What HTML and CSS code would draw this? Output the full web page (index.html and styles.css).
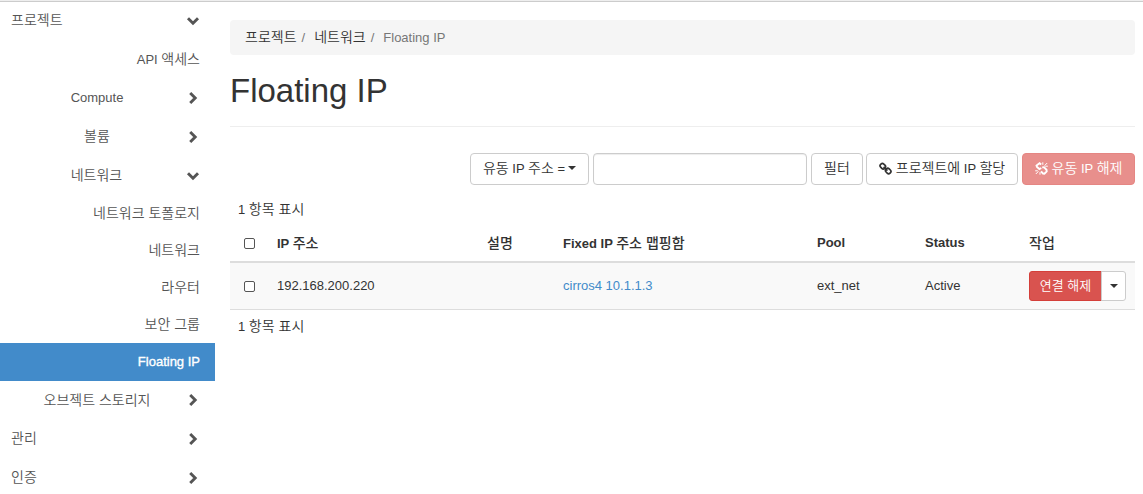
FILE: index.html
```html
<!DOCTYPE html>
<html lang="ko">
<head>
<meta charset="utf-8">
<title>Floating IP</title>
<link rel="stylesheet" href="styles.css">
</head>
<body>
<svg class="defs" width="0" height="0">
  <symbol id="right" viewBox="0 0 12 14"><path d="M3.2 2 L8.2 7 L3.2 12" fill="none" stroke="currentColor" stroke-width="2.9"/></symbol>
  <symbol id="down" viewBox="0 0 14 12"><path d="M2 3.2 L7 8.2 L12 3.2" fill="none" stroke="currentColor" stroke-width="2.9"/></symbol>
</svg>
<div class="page">
  <nav class="sidebar">
    <a class="item root"><span class="ko">프로젝트</span><svg class="chev-d"><use href="#down"/></svg></a>
    <a class="item leaf api"><span>API <span class="ko">액세스</span></span></a>
    <a class="item group"><span>Compute</span><svg class="chev-r"><use href="#right"/></svg></a>
    <a class="item group"><span class="ko">볼륨</span><svg class="chev-r"><use href="#right"/></svg></a>
    <a class="item group"><span class="ko">네트워크</span><svg class="chev-d"><use href="#down"/></svg></a>
    <a class="item leaf"><span class="ko">네트워크 토폴로지</span></a>
    <a class="item leaf"><span class="ko">네트워크</span></a>
    <a class="item leaf"><span class="ko">라우터</span></a>
    <a class="item leaf"><span class="ko">보안 그룹</span></a>
    <a class="item leaf active"><span>Floating IP</span></a>
    <a class="item group storage"><span class="ko">오브젝트 스토리지</span><svg class="chev-r"><use href="#right"/></svg></a>
    <a class="item root"><span class="ko">관리</span><svg class="chev-r"><use href="#right"/></svg></a>
    <a class="item root"><span class="ko">인증</span><svg class="chev-r"><use href="#right"/></svg></a>
  </nav>
  <main class="content">
    <div class="breadcrumb">
      <span class="ko">프로젝트</span><span class="sep">/</span><span class="ko">네트워크</span><span class="sep">/</span><span class="current">Floating IP</span>
    </div>
    <h1>Floating IP</h1>
    <div class="toolbar">
      <button class="btn filter-by"><span><span class="ko">유동</span> IP <span class="ko">주소</span> =</span><i class="caret"></i></button>
      <input class="search" type="text">
      <button class="btn filter"><span class="ko">필터</span></button>
      <button class="btn allocate">
        <svg class="link" viewBox="0 0 13 13"><g fill="none" stroke="currentColor" stroke-width="1.7"><rect x="1" y="2" width="5.6" height="4.4" rx="2" transform="rotate(45 3.8 4.2)"/><rect x="6.4" y="6.8" width="5.6" height="4.4" rx="2" transform="rotate(45 9.2 9)"/><path d="M4.6 4.8l3.8 3.8"/></g></svg>
        <span><span class="ko">프로젝트에</span> IP <span class="ko">할당</span></span>
      </button>
      <button class="btn release">
        <svg class="link" viewBox="0 0 13 13"><g fill="none" stroke="currentColor" stroke-width="1.9"><path d="M6.2 2.4L4.6 1.2L1.5 3.5L2 5L4.4 7L6.3 6M7.2 5.4L9 5.2L11.5 7.8L11.7 9.4L9.4 11.7L8 11.5L6 9.3"/><path d="M7.8 .3v2.5M12.2 1L9.6 3.6M10.2 4.2h2.6M.2 8.8h2.6M3.4 9.4L.8 12M5 10.2v2.5" stroke-width="1"/></g></svg>
        <span><span class="ko">유동</span> IP <span class="ko">해제</span></span>
      </button>
    </div>
    <div class="count top">1 <span class="ko">항목 표시</span></div>
    <table>
      <colgroup><col class="c1"><col class="c2"><col class="c3"><col class="c4"><col class="c5"><col class="c6"><col class="c7"></colgroup>
      <thead><tr>
        <th><i class="check"></i></th><th>IP <span class="ko">주소</span></th><th><span class="ko">설명</span></th><th>Fixed IP <span class="ko">주소 맵핑함</span></th><th>Pool</th><th>Status</th><th><span class="ko">작업</span></th>
      </tr></thead>
      <tbody><tr>
        <td><i class="check"></i></td><td>192.168.200.220</td><td></td><td><a class="link-text">cirros4 10.1.1.3</a></td><td>ext_net</td><td>Active</td>
        <td><div class="actions"><button class="danger"><span class="ko">연결 해제</span></button><button class="toggle"><i class="caret"></i></button></div></td>
      </tr></tbody>
    </table>
    <div class="count bottom">1 <span class="ko">항목 표시</span></div>
  </main>
</div>
</body>
</html>
```
FILE: styles.css
```css
* { box-sizing: border-box; }
body {
  margin: 0; height: 494px; overflow: hidden; background: #fff; color: #333;
  font: 13px/18px "Liberation Sans", "Noto Sans CJK KR", sans-serif;
}
.defs { position: absolute; }
.ko { font-family: "Noto Sans CJK KR", sans-serif; font-size: 14px; font-weight: 350; line-height: 18px; }
.page { display: flex; height: 494px; overflow: hidden; border-top: 1px solid #eee; box-shadow: inset 0 1px #ccc; }
.sidebar { width: 215px; flex: none; color: #555; }
.item { display: flex; align-items: center; height: 39px; padding: 0 15px 0 11px; white-space: nowrap; }
.item > .ko, .breadcrumb > .ko { margin-bottom: 3px; }
.item svg { flex: none; }
.root { justify-content: space-between; }
.group { padding-left: 0; }
.group > span { width: 194px; text-align: center; margin-right: -7px; }
.leaf { height: 37px; justify-content: flex-end; }
.api { height: 38px; }
.active { height: 38px; background: #428bca; color: #fff; -webkit-text-stroke: .35px #fff; }
.storage { height: 38px; }
.chev-r { width: 12px; height: 14px; }
.root .chev-r { margin-right: 1px; }
.chev-d { width: 14px; height: 12px; }
.root .chev-d { margin-top: 1px; }
.content { width: 905px; margin-left: 15px; }
.breadcrumb { display: flex; align-items: center; height: 35px; margin-top: 19px; padding: 0 15px; background: #f5f5f5; border-radius: 4px; }
.sep { color: #777; padding: 0 9px 0 5px; }
.current { color: #777; }
h1 { margin: 0; height: 72px; padding-top: 16px; border-bottom: 1px solid #eee; font-size: 33px; line-height: 40px; font-weight: 400; }
.toolbar { display: flex; justify-content: flex-end; margin-top: 26px; height: 32px; }
.btn { display: flex; align-items: center; justify-content: center; height: 32px; padding: 0 0 2px; border: 1px solid #ccc; border-radius: 4px; background: #fff; color: #333; font: inherit; white-space: nowrap; }
.filter-by { width: 119px; gap: 3px; }
.search { width: 214px; height: 32px; margin: 0 4px; border: 1px solid #ccc; border-radius: 4px; box-shadow: inset 0 1px 1px rgba(0,0,0,.075); }
.filter { width: 52px; margin-right: 3px; padding-bottom: 4px; }
.allocate { width: 152px; gap: 4px; margin-right: 4px; }
.release { width: 113px; gap: 4px; color: #fff; background: #e88f8c; border-color: #e58683; }
.link { width: 13px; height: 13px; }
.caret { width: 0; height: 0; border: 4px solid transparent; border-top-color: currentColor; border-bottom: 0; }
.count { padding-left: 8px; height: 18px; }
.top { margin-top: 14px; }
.bottom { margin-top: 6px; }
table { width: 905px; margin-top: 8px; table-layout: fixed; border-collapse: separate; border-spacing: 0; }
.c1 { width: 39px; } .c2 { width: 210px; } .c3 { width: 76px; } .c4 { width: 254px; }
.c5 { width: 108px; } .c6 { width: 104px; } .c7 { width: 114px; }
th, td { padding: 0 8px; text-align: left; white-space: nowrap; }
th { height: 38px; border-bottom: 2px solid #ddd; }
th .ko { font-weight: 500; }
td { height: 47px; background: #f9f9f9; border-bottom: 1px solid #ddd; }
.check { display: block; width: 11px; height: 11px; margin: 0 0 0 6px; border: 1px solid #555; border-radius: 2px; background: #fff; }
.link-text { color: #428bca; }
.actions { display: flex; height: 30px; }
.danger { width: 73px; padding: 0 0 2px; border: 1px solid #d43f3a; border-radius: 3px 0 0 3px; background: #d9534f; color: #fff; font: inherit; }
.danger .ko { font-size: 13px; }
.toggle { display: flex; align-items: center; justify-content: center; width: 25px; padding: 0; margin-left: -1px; border: 1px solid #ccc; border-radius: 0 3px 3px 0; background: #fff; color: #333; }
```
